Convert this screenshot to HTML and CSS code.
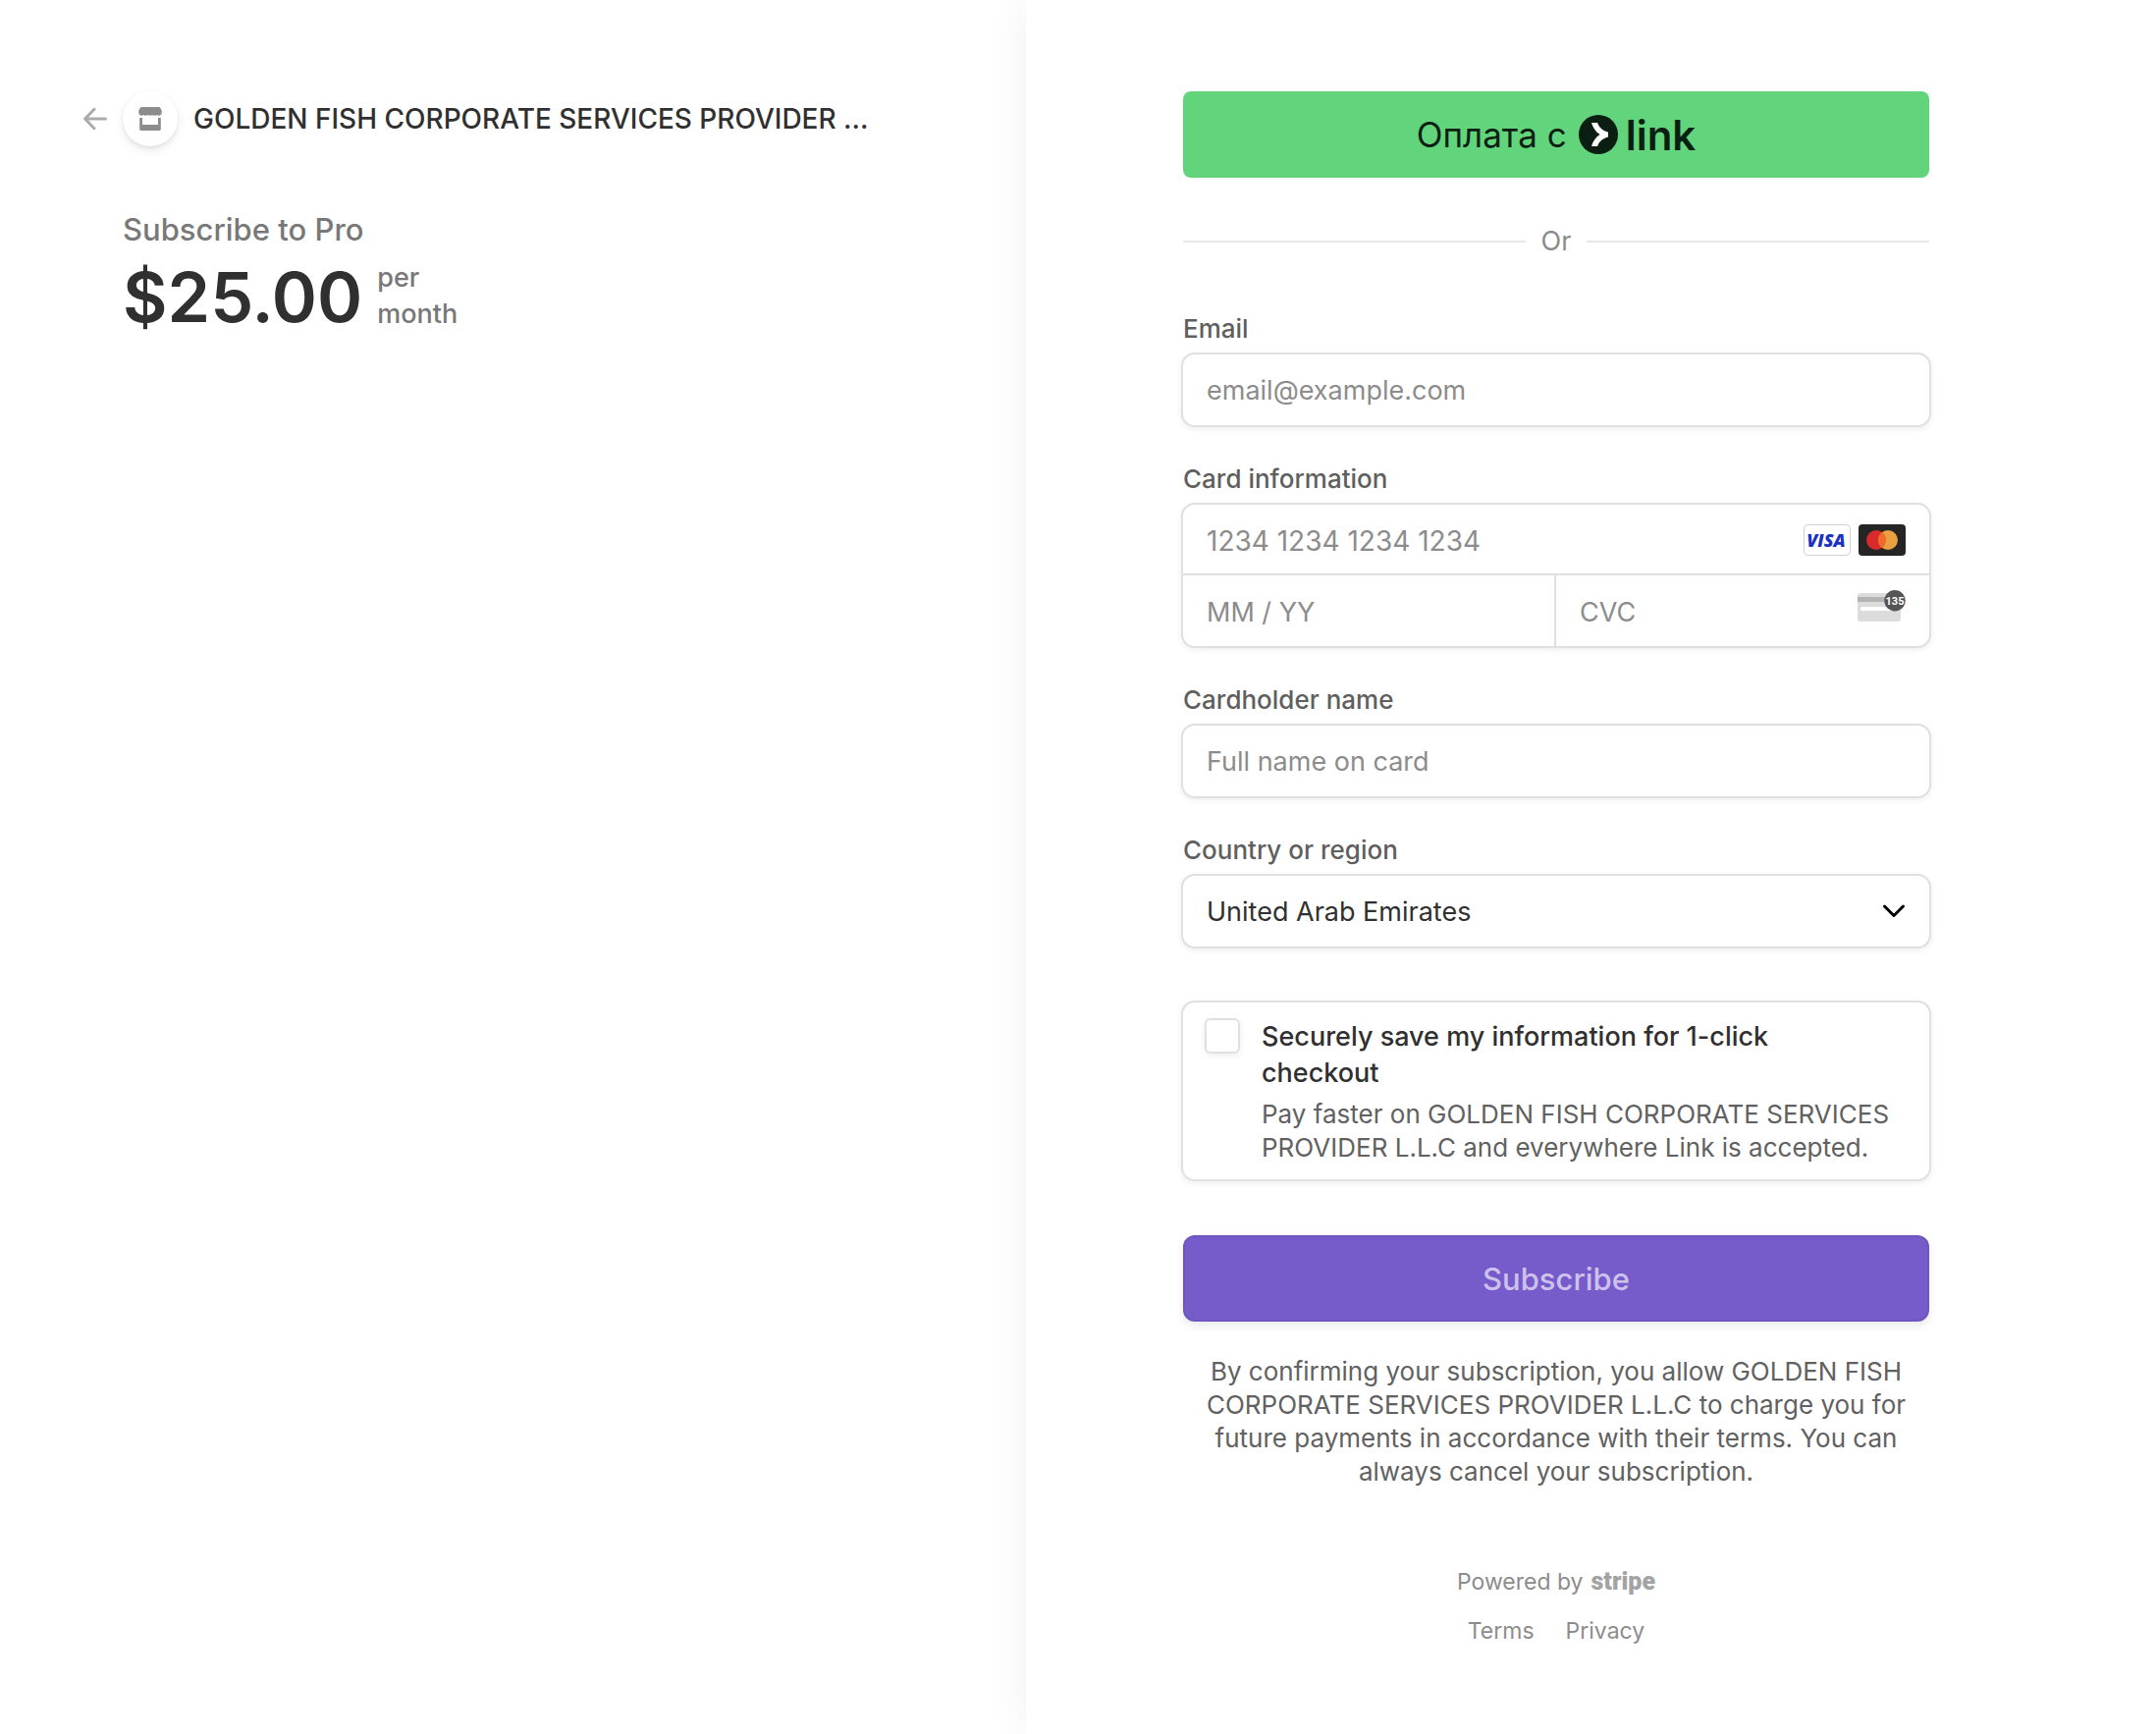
FILE: index.html
```html
<!DOCTYPE html>
<html lang="en">
<head>
<meta charset="utf-8">
<title>Checkout</title>
<meta name="viewport" content="width=device-width, initial-scale=1">
<link rel="stylesheet" href="styles.css">
</head>
<body>
<div class="checkout">
  <section class="summary">
    <header class="merchant">
      <a class="back" href="#" aria-label="Back">
        <svg width="24" height="24" viewBox="0 0 24 24" fill="none" stroke="currentColor" stroke-width="3" stroke-linecap="round" stroke-linejoin="round"><path d="M22.500 12H2M11 2.300 1.600 12l9.400 9.700"/></svg>
      </a>
      <span class="store">
        <svg width="24" height="24" viewBox="0 0 24 24" fill="#8c8c8c"><path d="M3.200 0h17.600q1 0 1.500.9L23.700 3.600v2.600a2.900 2.900 0 0 1-4.500 1.900 3.300 3.300 0 0 1-3.600.2 1 1 0 0 1-1.600-.2 3.300 3.300 0 0 1-4 0 1 1 0 0 1-1.600.2 3.300 3.300 0 0 1-3.600-.2A2.900 2.900 0 0 1 .3 6.200V3.600L1.700.9Q2.200 0 3.200 0Z"/><path d="M1.200 11H4v7h16v-7h2.800v11.600q0 1.400-1.400 1.400H2.600q-1.400 0-1.400-1.400Z"/></svg>
      </span>
      <span class="merchant-name">GOLDEN FISH CORPORATE SERVICES PROVIDER ...</span>
    </header>
    <div class="product">
      <h1 class="product-title">Subscribe to Pro</h1>
      <div class="price">
        <span class="amount">$25.00</span>
        <span class="interval">per<br>month</span>
      </div>
    </div>
  </section>

  <main class="payment">
    <form class="form">
      <button class="link-button" type="button">
        <span>Оплата с</span>
        <span class="link-logo">
          <svg width="40" height="40" viewBox="0 0 40 40"><circle cx="20" cy="20" r="20" fill="#0a1f12"/><path d="M13 8h6.200c1.200 4.900 5.600 8.200 10.800 9.600v4.800c-5.200 1.400-9.600 4.700-10.800 9.600H13c1.300-5 4.300-9.200 8.600-12C17.300 17.200 14.300 13 13 8Z" fill="#fff"/></svg>
          <span class="link-word">link</span>
        </span>
      </button>

      <div class="divider">Or</div>

      <div class="fields">
        <div class="field">
          <label class="label" for="email">Email</label>
          <input class="control" id="email" type="email" placeholder="email@example.com">
        </div>

        <div class="field">
          <label class="label" for="card">Card information</label>
          <div class="card">
            <div class="card-cell card-number">
              <input class="card-input" id="card" type="text" placeholder="1234 1234 1234 1234">
              <span class="brands">
                <svg width="48" height="32" viewBox="0 0 48 32"><rect x=".5" y=".5" width="47" height="31" rx="4" fill="#fff" stroke="#cfcfcf"/><text class="visa" x="23" y="23" text-anchor="middle">VISA</text></svg>
                <svg width="48" height="32" viewBox="0 0 48 32"><rect width="48" height="32" rx="4" fill="#252525"/><circle cx="18" cy="16" r="10" fill="#d92b2b"/><circle cx="30" cy="16" r="10" fill="#e9a140"/><path d="M24 8a10 10 0 0 1 0 16 10 10 0 0 1 0-16Z" fill="#ee6a2c"/></svg>
              </span>
            </div>
            <div class="card-cell card-expiry">
              <input class="card-input" type="text" placeholder="MM / YY" aria-label="Expiration">
            </div>
            <div class="card-cell">
              <input class="card-input" type="text" placeholder="CVC" aria-label="CVC">
              <svg class="cvc-icon" width="49" height="32" viewBox="0 0 49 32"><rect y="3" width="44" height="29" rx="3" fill="#dcdcdc"/><path d="M0 7h44v5H0z" fill="#b3b3b3"/><rect x="3" y="17" width="38" height="4" rx="2" fill="#fff"/><circle cx="38" cy="10.700" r="10.700" fill="#555"/><text class="cvc-digits" x="38" y="15" text-anchor="middle">135</text></svg>
            </div>
          </div>
        </div>

        <div class="field">
          <label class="label" for="name">Cardholder name</label>
          <input class="control" id="name" type="text" placeholder="Full name on card">
        </div>

        <div class="field">
          <label class="label" for="country">Country or region</label>
          <div class="select">
            <select class="control" id="country"><option>United Arab Emirates</option></select>
            <svg class="chevron" width="24" height="24" viewBox="0 0 24 24" fill="none" stroke="#000" stroke-width="3" stroke-linecap="round" stroke-linejoin="round"><path d="m2.500 7 9.500 9.500L21.500 7"/></svg>
          </div>
        </div>
      </div>

      <div class="save">
        <input class="checkbox" id="save" type="checkbox">
        <div class="save-text">
          <label class="save-title" for="save">Securely save my information for 1-click checkout</label>
          <p class="save-note">Pay faster on GOLDEN FISH CORPORATE SERVICES PROVIDER L.L.C and everywhere Link is accepted.</p>
        </div>
      </div>

      <button class="submit" type="submit">Subscribe</button>

      <p class="terms">By confirming your subscription, you allow GOLDEN FISH CORPORATE SERVICES PROVIDER L.L.C to charge you for future payments in accordance with their terms. You can always cancel your subscription.</p>
    </form>

    <footer class="footer">
      <a class="powered" href="#">Powered by <span class="stripe">stripe</span></a>
      <nav class="legal"><a href="#">Terms</a><a href="#">Privacy</a></nav>
    </footer>
  </main>
</div>
</body>
</html>
```
FILE: styles.css
```css
* { box-sizing: border-box; }

body {
  margin: 0;
  background: #fff;
  color: #303030;
  font-family: Inter, "Liberation Sans", sans-serif;
  font-size: 27px;
  line-height: 37px;
}

h1, p { margin: 0; }
a { color: inherit; text-decoration: none; }
button, input, select { font: inherit; color: inherit; }
svg { display: block; flex: none; }

.checkout {
  display: grid;
  grid-template-columns: 1045fr 1151fr;
  min-height: 100vh;
  overflow: hidden;
}

/* Order summary */
.summary { padding: 93px 160px 48px 85px; }

.merchant {
  display: flex;
  align-items: center;
  gap: 16px;
}

.back { color: #ababab; }

.store {
  display: flex;
  flex: none;
  align-items: center;
  justify-content: center;
  width: 56px;
  height: 56px;
  border-radius: 50%;
  box-shadow: 0 4px 10px rgba(48, 49, 61, .1), 0 2px 4px rgba(0, 0, 0, .06);
}

.merchant-name {
  font-size: 28px;
  font-weight: 500;
  white-space: nowrap;
}

.product { padding: 64px 0 0 40px; color: #787878; }

.product-title {
  font-size: 31px;
  font-weight: 500;
  line-height: 42px;
}

.price {
  display: flex;
  align-items: center;
  gap: 15px;
}

.amount {
  padding-top: 4px;
  color: #303030;
  font-size: 70px;
  font-weight: 600;
  line-height: 88px;
}

.interval { font-weight: 500; }

/* Payment form */
.payment {
  padding: 93px 48px 48px 158px;
  background: #fff;
  box-shadow: 0 0 40px rgba(0, 0, 0, .06);
}

.form, .footer { max-width: 764px; }

.link-button, .submit {
  display: flex;
  align-items: center;
  justify-content: center;
  width: calc(100% - 4px);
  height: 88px;
  margin: 0 2px;
  padding: 0;
  border: 0;
}

.link-button {
  gap: 12px;
  border-radius: 8px;
  background: #62d57c;
  color: #0a1f12;
  font-size: 35px;
}

.link-logo {
  display: flex;
  align-items: center;
  gap: 8px;
}

.link-word { font-size: 42px; font-weight: 600; }

.divider {
  display: flex;
  align-items: center;
  gap: 16px;
  margin: 46px 2px 54px;
  color: #8a8a8a;
}

.divider::before, .divider::after {
  content: "";
  flex: 1;
  height: 2px;
  background: #e8e8e8;
}

.fields {
  display: flex;
  flex-direction: column;
  gap: 36px;
}

.field {
  display: flex;
  flex-direction: column;
  gap: 8px;
}

.label {
  padding-left: 2px;
  color: #5f5f5f;
  font-size: 26px;
  font-weight: 500;
  line-height: 33px;
}

.control, .card, .save {
  width: 100%;
  border: 2px solid #e0e0e0;
  border-radius: 14px;
  background: #fff;
  box-shadow: 0 2px 6px rgba(0, 0, 0, .07);
}

.control {
  height: 76px;
  padding: 0 24px;
  appearance: none;
}

::placeholder { color: #8c8c8c; opacity: 1; }

.card {
  display: grid;
  grid-template-columns: repeat(2, minmax(0, 1fr));
}

.card-cell {
  display: flex;
  align-items: center;
  height: 72px;
  padding: 0 24px;
}

.card-number {
  grid-column: 1 / -1;
  padding-top: 2px;
  border-bottom: 2px solid #e0e0e0;
}

.card-expiry { border-right: 2px solid #e0e0e0; }

.card-input {
  flex: 1;
  min-width: 0;
  height: 68px;
  padding: 2px 0 0;
  border: 0;
  background: none;
}

.card-number .card-input { font-size: 28px; }

.brands { display: flex; gap: 8px; }

.visa {
  fill: #1a32c4;
  font: italic 800 18px "Open Sans", sans-serif;
}

.cvc-icon { margin-bottom: 10px; }

.cvc-digits {
  fill: #fff;
  font: 700 11px Roboto, sans-serif;
}

.select { display: grid; align-items: center; }
.select > * { grid-area: 1 / 1; }

.chevron {
  justify-self: end;
  margin-right: 26px;
  pointer-events: none;
}

.save {
  display: flex;
  gap: 22px;
  margin-top: 53px;
  padding: 16px 22px 15px;
}

.checkbox {
  flex: none;
  width: 36px;
  height: 36px;
  margin: 0;
  border: 2px solid #e0e0e0;
  border-radius: 6px;
  background: #fff;
  box-shadow: 0 2px 6px rgba(0, 0, 0, .08);
  appearance: none;
}

.save-title {
  display: block;
  max-width: 600px;
  font-weight: 500;
}

.save-note {
  margin-top: 7px;
  color: #616161;
  font-size: 26px;
  line-height: 34px;
}

.submit {
  margin-top: 55px;
  border-radius: 12px;
  background: #765bcb;
  box-shadow: inset 0 0 0 2px rgba(50, 50, 93, .1), 0 4px 10px rgba(0, 0, 0, .09);
  color: #cdc1ed;
  font-size: 31px;
  font-weight: 500;
}

.terms {
  margin-top: 34px;
  padding: 0 24px;
  color: #616161;
  font-size: 26px;
  line-height: 34px;
  text-align: center;
}

.footer {
  display: flex;
  flex-direction: column;
  align-items: center;
  gap: 16px;
  margin-top: 78px;
  color: #8c8c8c;
  font-size: 23px;
  line-height: 34px;
}

.powered {
  display: flex;
  align-items: center;
  gap: 8px;
}

.stripe {
  color: #a3a3a3;
  font: 900 25px/34px Roboto, sans-serif;
}

.legal { display: flex; gap: 32px; }
```
